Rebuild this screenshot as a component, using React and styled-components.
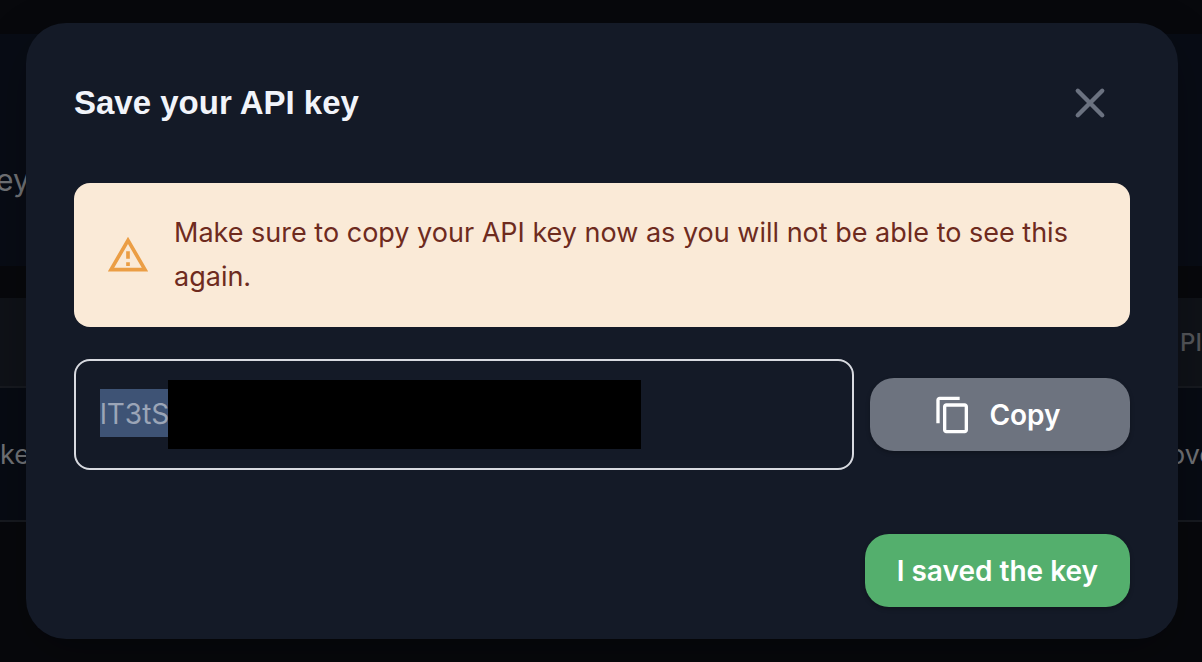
import React from "react";
import styled, { createGlobalStyle } from "styled-components";
import { MdContentCopy } from "react-icons/md";

const GlobalStyle = createGlobalStyle`
  *, *::before, *::after { box-sizing: border-box; }
  body {
    margin: 0;
    background: #07080c;
    font-family: Inter, "Liberation Sans", sans-serif;
  }
`;

const Screen = styled.div`
  display: grid;
  min-height: 100vh;
  overflow: hidden;

  > * { grid-area: 1 / 1; }
`;

const Backdrop = styled.div`
  display: flex;
  flex-direction: column;
  min-width: 0;
  color: #717377;
`;

const Panel = styled.section`
  display: flex;
  align-items: center;
  height: 232px;
  margin: 34px 0 32px;
  padding-top: 60px;
  background: #080c15;
  font-size: 30px;
  text-indent: -4px;
`;

const TableRow = styled.div`
  display: flex;
  align-items: center;
  justify-content: space-between;
  height: ${(p) => (p.$head ? 90 : 134)}px;
  border-bottom: 2px solid #171a20;
  background: ${(p) => (p.$head ? "#0f1218" : "#070b13")};
  color: ${(p) => (p.$head ? "#55575b" : "inherit")};
  font-size: ${(p) => (p.$head ? 24 : 27)}px;
  font-weight: ${(p) => (p.$head ? 500 : 400)};
`;

const EndCell = styled.span`
  width: ${(p) => (p.$head ? 22 : 33)}px;
  white-space: nowrap;
`;

const Dialog = styled.div`
  position: relative;
  align-self: start;
  margin: 23px 24px 23px 26px;
  padding: 48px 48px 32px;
  border-radius: 40px;
  background: #141a27;
  box-shadow: 0 16px 48px rgba(0, 0, 0, 0.25);
`;

const Header = styled.header`
  display: flex;
  align-items: center;
  justify-content: space-between;
  height: 64px;
  padding-right: 16px;
`;

const Title = styled.h2`
  margin: 0;
  color: #f1f4fa;
  font: 700 33px/48px "Liberation Sans", Arial, sans-serif;
`;

const CloseButton = styled.button`
  display: flex;
  padding: 0;
  border: 0;
  background: none;
  color: #6b7280;
  cursor: pointer;
`;

const Alert = styled.div`
  display: flex;
  align-items: center;
  gap: 24px;
  margin-top: 48px;
  padding: 28px 32px;
  border-radius: 16px;
  background: #faead7;
  color: #6e2b1e;
  font-size: 27px;
  line-height: 44px;

  svg {
    flex: none;
    color: #eb9e45;
  }
  p { margin: 0; }
`;

const KeyRow = styled.div`
  display: flex;
  align-items: center;
  gap: 16px;
  margin-top: 32px;
`;

const KeyField = styled.div`
  position: relative;
  flex: 1;
  min-width: 0;
`;

/* The key is shown highlighted, ready to be copied. */
const KeyInput = styled.input`
  display: block;
  width: 100%;
  height: 111px;
  padding: 0 24px 2px;
  border: 2px solid #d8dae0;
  border-radius: 16px;
  outline: 0;
  background: linear-gradient(#3e5375, #3e5375) 24px 28px / 80px 48px no-repeat;
  color: #9ba5b7;
  font: 400 28px/48px Inter, sans-serif;
`;

const Redaction = styled.span`
  position: absolute;
  top: 21px;
  left: 94px;
  width: 473px;
  height: 69px;
  background: #000;
`;

const Button = styled.button`
  display: flex;
  align-items: center;
  justify-content: center;
  gap: 16px;
  height: 73px;
  padding: 0 32px;
  border: 0;
  border-radius: 24px;
  background: ${(p) => (p.$primary ? "#54af6d" : "#6d737f")};
  box-shadow: 0 2px 4px rgba(0, 0, 0, 0.25);
  color: #fff;
  font: 600 28px/40px Inter, sans-serif;
  cursor: pointer;

  svg { font-size: 40px; }
`;

const CopyButton = styled(Button)`
  width: 260px;
  padding: 0 38px 0 32px;
`;

const Footer = styled.footer`
  display: flex;
  justify-content: flex-end;
  margin-top: 64px;
`;

function CloseIcon() {
  return (
    <svg width="48" height="48" viewBox="0 0 24 24" fill="none" aria-hidden="true">
      <path
        d="M5.9 5.9 18.1 18.1M18.1 5.9 5.9 18.1"
        stroke="currentColor"
        strokeWidth="2.2"
        strokeLinecap="round"
      />
    </svg>
  );
}

function WarningIcon() {
  return (
    <svg width="44" height="44" viewBox="0 0 24 24" fill="currentColor" aria-hidden="true">
      <path d="M12 5.99 19.53 19H4.47L12 5.99M12 2 1 21h22L12 2zm1 14h-2v2h2v-2zm0-6h-2v4h2v-4z" />
    </svg>
  );
}

export default function App() {
  return (
    <>
      <GlobalStyle />
      <Screen>
        <Backdrop aria-hidden="true">
          <Panel>ey</Panel>
          <TableRow $head>
            <span />
            <EndCell $head>PI</EndCell>
          </TableRow>
          <TableRow>
            <span>ke</span>
            <EndCell>ove</EndCell>
          </TableRow>
        </Backdrop>
        <Dialog role="dialog" aria-modal="true" aria-labelledby="dialog-title">
          <Header>
            <Title id="dialog-title">Save your API key</Title>
            <CloseButton type="button" aria-label="Close">
              <CloseIcon />
            </CloseButton>
          </Header>
          <Alert role="alert">
            <WarningIcon />
            <p>
              Make sure to copy your API key now as you will not be able to see
              this again.
            </p>
          </Alert>
          <KeyRow>
            <KeyField>
              <KeyInput aria-label="API key" readOnly value="lT3tS" />
              <Redaction />
            </KeyField>
            <CopyButton type="button">
              <MdContentCopy />
              Copy
            </CopyButton>
          </KeyRow>
          <Footer>
            <Button type="button" $primary>
              I saved the key
            </Button>
          </Footer>
        </Dialog>
      </Screen>
    </>
  );
}
